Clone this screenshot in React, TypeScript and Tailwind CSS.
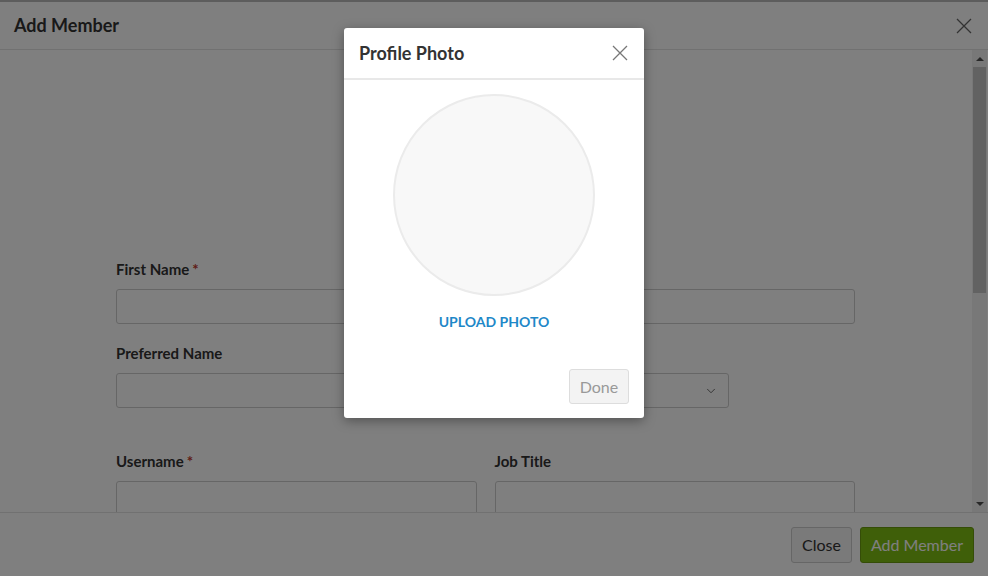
import { ChevronDown } from 'lucide-react';

function CloseIcon({ className = '' }: { className?: string }) {
  return (
    <svg viewBox="0 0 16 16" className={className} fill="none" stroke="currentColor" strokeWidth="1.3">
      <path d="M1 1 L15 15 M15 1 L1 15" />
    </svg>
  );
}

function Label({ text, required }: { text: string; required?: boolean }) {
  return (
    <div className="mb-[10px] h-[20px] text-[15px] font-bold leading-[20px] text-[#333]">
      {text}
      {required && <span className="ml-[3px] text-[#c0392b]">*</span>}
    </div>
  );
}

function Field({ label, required, select }: { label: string; required?: boolean; select?: boolean }) {
  return (
    <div>
      <Label text={label} required={required} />
      {select ? (
        <div className="flex h-[35px] w-[234px] items-center justify-end rounded-[3px] border border-[#ccc] bg-white pr-[10px]">
          <ChevronDown className="h-[14px] w-[14px] text-[#555]" strokeWidth={1.5} />
        </div>
      ) : (
        <div className="h-[35px] rounded-[3px] border border-[#ccc] bg-white" />
      )}
    </div>
  );
}

export default function App() {
  return (
    <div className="relative h-[576px] w-[988px] overflow-hidden bg-white font-['Lato','Open_Sans',sans-serif]">
      <div className="flex h-[50px] items-center justify-between border-t-2 border-b border-t-[#bbb] border-b-[#e2e2e2] pl-[14px] pr-[16px]">
        <h1 className="text-[18px] font-bold text-[#333]">Add Member</h1>
        <CloseIcon className="h-[16px] w-[16px] text-[#666]" />
      </div>

      <div className="flex h-[462px]">
        <div className="flex-1 overflow-hidden">
          <div className="h-[209px]" />
          <div className="ml-[116px] grid w-[739px] grid-cols-2 gap-x-[18px] gap-y-[19px]">
            <Field label="First Name" required />
            <Field label="Last Name" required />
            <Field label="Preferred Name" />
            <Field label="Pronouns" select />
          </div>
          <div className="ml-[116px] mt-[43px] grid w-[739px] grid-cols-2 gap-x-[18px]">
            <Field label="Username" required />
            <Field label="Job Title" />
          </div>
        </div>
        <div className="mr-[1px] flex w-[15px] flex-col items-center bg-[#f1f1f1]">
          <div className="flex h-[17px] w-full items-center justify-center">
            <div className="h-0 w-0 border-x-[4px] border-b-[4px] border-x-transparent border-b-[#505050]" />
          </div>
          <div className="h-[226px] w-[13px] bg-[#c4c4c4]" />
          <div className="flex-1" />
          <div className="flex h-[17px] w-full items-center justify-center">
            <div className="h-0 w-0 border-x-[4px] border-t-[4px] border-x-transparent border-t-[#505050]" />
          </div>
        </div>
      </div>

      <div className="flex h-[64px] items-center justify-end gap-[8px] border-t border-[#e2e2e2] pr-[14px]">
        <button className="h-[36px] rounded-[3px] border border-[#ccc] bg-[#f4f4f4] px-[10px] text-[16px] text-[#333]">
          Close
        </button>
        <button className="h-[36px] rounded-[3px] border border-[#6a9a10] bg-[#7fbf12] px-[10px] text-[16px] text-white">
          Add Member
        </button>
      </div>

      <div className="absolute inset-0 bg-black/50" />

      <div className="absolute left-[344px] top-[28px] flex h-[390px] w-[300px] flex-col rounded-[3px] bg-white shadow-[0_3px_12px_rgba(0,0,0,0.35)]">
        <div className="flex h-[52px] items-center justify-between border-b-2 border-[#e8e8e8] pl-[15px] pr-[16px]">
          <h2 className="text-[18px] font-bold text-[#333]">Profile Photo</h2>
          <CloseIcon className="h-[16px] w-[16px] text-[#777]" />
        </div>
        <div className="flex flex-1 flex-col items-center pt-[14px]">
          <div className="h-[202px] w-[202px] rounded-full border-2 border-[#ebebeb] bg-[#f8f8f8]" />
          <button className="mt-[17px] text-[14px] font-bold leading-[18px] text-[#1e88c8]">UPLOAD PHOTO</button>
          <div className="mt-auto flex w-full justify-end pb-[14px] pr-[15px]">
            <button className="h-[35px] w-[60px] rounded-[3px] border border-[#ddd] bg-[#f3f3f3] text-[16px] text-[#999]">
              Done
            </button>
          </div>
        </div>
      </div>
    </div>
  );
}
